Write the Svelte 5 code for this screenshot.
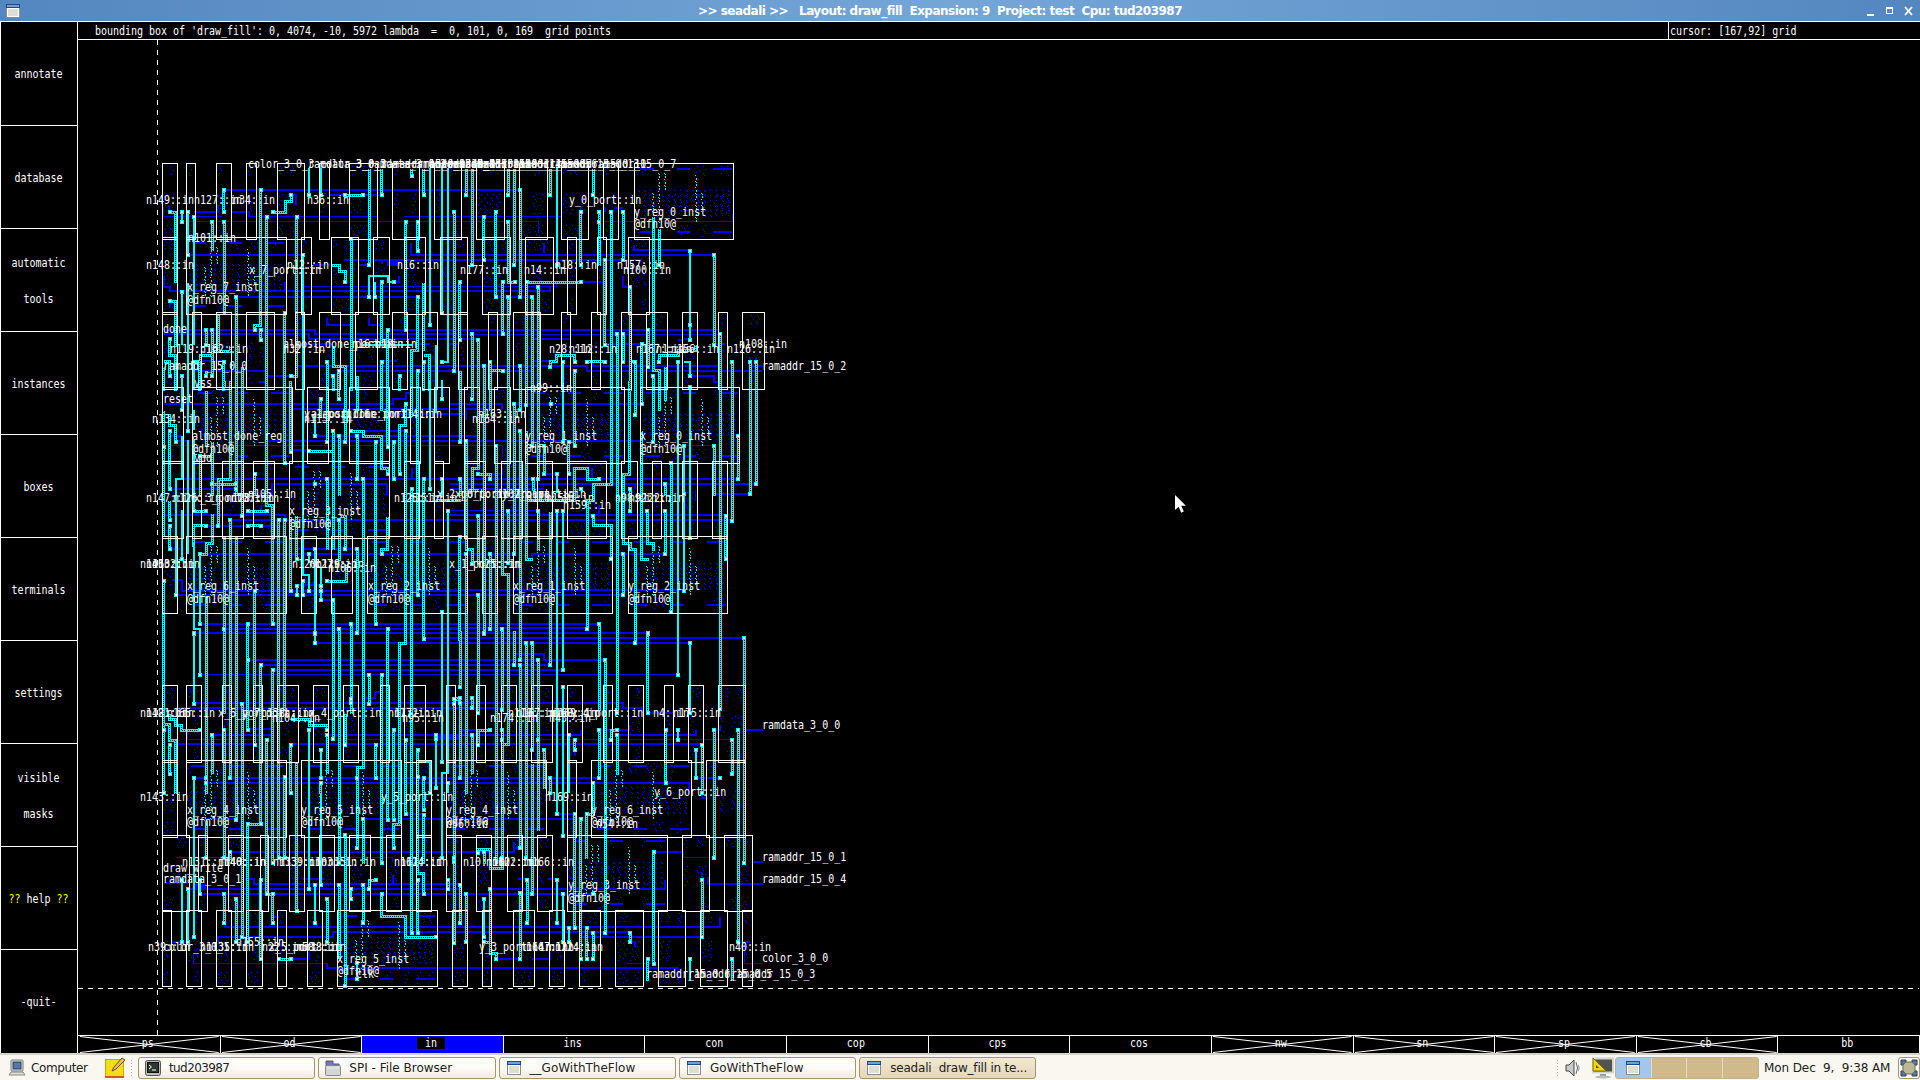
<script>
  const menu = [['annotate'], ['database'], ['automatic', 'tools'], ['instances'], ['boxes'], ['terminals'], ['settings'], ['visible', 'masks'], ['?? help ??'], ['-quit-']];
  const masks = [
    ['ps', 1], ['od', 1], ['in', 2], ['ins', 0], ['con', 0], ['cop', 0], ['cps', 0], ['cos', 0],
    ['nw', 1], ['sn', 1], ['sp', 1], ['cb', 1], ['bb', 0]
  ];
  const tasks = [['tud203987', 'term'], ['SPI - File Browser', 'folder'], ['__GoWithTheFlow', 'win'], ['GoWithTheFlow', 'win'], ['seadali  draw_fill in te...', 'win']];

  // Cell outlines: [top, bottom, "left-right ..."] for every placement row.
  const rows = [
    [163, 239, '162-177 186-195 216-231 246-256 277-304 319-329 349-377 392-419 434-461 476-504 519-547 561-588 603-618 634-733'],
    [237, 314, '162-177 186-286 301-311 331-358 373-389 404-425 440-467 482-510 525-553 567-576 597-606 628-649'],
    [312, 389, '162-177 192-201 216-231 246-274 295-304 319-340 355-377 392-407 422-437 458-467 488-497 513-540 561-570 591-600 621-631 646-667 682-697 718-727 742-764'],
    [387, 463, '162-183 192-292 307-328 349-389 410-420 434-449 464-479 494-510 525-624 640-739'],
    [461, 538, '162-183 192-201 222-243 253-274 289-389 404-419 434-443 464-485 501-522 537-552 567-606 621-637 652-661 682-697 712-727'],
    [536, 613, '162-177 186-286 301-316 331-352 367-467 482-497 513-612 628-727'],
    [685, 762, '162-177 186-201 222-231 253-262 277-298 313-328 343-358 380-389 404-425 446-455 476-485 501-516 531-552 567-582 603-612 628-643 664-673 688-703 718-745'],
    [760, 837, '162-177 186-286 301-401 416-431 446-546 567-576 591-691 706-745'],
    [835, 911, '162-189 198-207 228-243 260-268 289-304 319-334 349-370 386-401 416-431 446-461 476-491 507-522 537-552 567-667 682-709 724-752'],
    [910, 986, '162-171 186-201 216-231 246-262 277-286 307-322 337-437 452-467 482-491 513-534 549-564 579-600 615-643 658-685 700-727 742-752']
  ];
  const cells = rows.flatMap(([t, b, s]) => s.split(' ').map((p) => {
    const [l, r] = p.split('-').map(Number);
    return { l, r, t, b };
  }));

  // Wiring by region, in thirds of a pixel from the region origin.
  // d: via-filled metal, s: plain metal, b: blue mask, c: thin blue; * marks a contact.
  const regions = [
    [130, 150, `d 281,120* 281,186*;d 392,120* 392,527 374,527 374,540*;d 429,186* 465,186 465,154 483,154 483,135*;d 119,186* 137,186 137,398;s 155,186* 155,215*;s 173,186* 173,315*;s 173,398 173,720;s 191,200* 191,585;d 246,215* 246,302;d 282,215* 282,490;d 410,200* 410,720;d 500,200* 500,678 482,678*;s 537,55 537,135*;s 572,55 572,135*;d 644,135* 698,135*;d 718,55 718,345*;d 755,55 755,135*;d 845,55 845,77*;d 881,55 881,135*;s 900,55 900,525*;s 936,55 936,490*;s 954,55 954,635 936,635*;d 972,186* 972,662*;d 827,215* 827,540*;d 863,215* 863,303*;d 664,268* 664,720;s 519,315* 519,720;d 600,345 628,345 628,363 646,363 646,396*;s 717,440* 717,378 775,378 775,396 791,396*;s 736,440* 736,396;d 755,396* 755,580;d 881,396 881,600;d 863,440* 863,600 845,600 845,720;s 155,427* 155,585;d 318,440* 318,720;d 119,454* 137,454 137,590;d 264,490 264,600;d 464,490* 464,720;d 228,540* 228,585*;d 246,540* 246,615 210,615 210,635 191,635*;d 392,540* 392,570*;d 773,540* 773,720;d 119,568* 119,617 137,617 137,720;d 610,585 610,650 646,650 646,720;d 592,635* 592,720;d 101,635 119,635 119,678*;d 626,662* 626,720;d 681,675 681,720;d 336,650 336,720;d 281,635* 281,720;s 918,585 918,720;d 881,617 899,617 899,720;d 881,635* 881,720;d 755,635* 755,720;d 809,678* 809,720;d 863,662* 863,720;s 155,678* 155,720;d 101,650 101,720;s 191,635 191,720;d 209,635 209,720;d 228,660 228,678*;d 246,600 246,678*;d 610,678* 610,720;s 700,585 845,585;d 250,603 300,603 300,585;
b 281,120 990,120;b 118,165 118,186 135,186;b 191,186 263,186 263,165;b 305,186 356,186 356,200;c 101,170 101,200 275,200;c 356,200 740,200;c 820,200 990,200;c 155,215 990,215;b 483,135 498,135 498,165;b 600,135 755,135;b 173,315 519,315;b 842,280 842,315 990,315;b 642,330 990,330;b 548,345 600,345;b 685,345 717,345;b 770,333 810,333;b 770,339 810,339;b 770,345 810,345;b 755,330 755,342;b 806,378 806,396 791,396;b 101,378 101,410 119,410 119,423 990,423;c 520,410 990,410;b 464,396 464,423;b 318,440 863,440;b 101,540 554,540 554,553 990,553;b 101,553 536,553 536,567 950,567;b 774,540 990,540;b 590,505 590,525 663,525;b 717,505 717,525 755,525;b 500,582 610,582;b 845,582 900,582;b 500,648 990,648;b 191,662 410,662;b 626,662 990,662;b 411,678 482,678;b 388,695 410,695;b 191,632 281,632;b 755,632 800,632;b 119,475 119,456`],
    [450, 150, `d 49,55 49,135*;d 67,55 67,345*;d 175,55 175,135*;d 193,55 193,345*;d 211,120* 211,440*;d 301,55 301,135*;s 320,55 320,345*;d 429,55 429,135*;d 101,200* 101,330*;d 137,186* 137,440*;d 175,215* 175,396 195,396*;d 392,186* 392,345*;d 447,186* 447,345;d 447,215* 447,220;d 483,186* 483,720;d 519,186* 519,330*;d 610,200 610,662 628,662 628,720;d 628,235 628,345*;d 29,396* 29,570*;d 158,396* 158,553*;d 231,396* 392,396*;d 229,396 229,720;d 247,440* 247,720;d 265,410* 265,720;d 175,440* 175,720;d 464,330* 464,585*;d 540,410* 540,720;s 720,303* 720,525*;s 720,525 720,570*;d 792,315* 792,585*;d 67,553* 67,720;d 85,570* 85,720;d 501,553* 501,720;d 519,553* 519,635*;d 595,540* 595,650*;d 810,553* 810,720;d 575,582* 575,720;d 540,635 556,635* 556,720;d 301,650* 301,635 320,635 320,617 374,617 374,635*;d 410,635* 464,635*;s 338,635* 338,720;d 374,662* 374,720;d 121,662 158,662*;d 121,635* 121,720;d 103,648* 103,720;d 31,662 31,720;d 211,648* 211,720;d 628,635* 628,617 686,617 686,600 737,600 737,582;s 684,635* 684,720;s 702,635 720,635 720,678*;s 720,712 720,720;d 846,635* 846,720;d 900,635* 900,720;d 918,635* 918,720;d 646,648 646,720;d 610,678* 610,720;
b 0,120 211,120;c 0,200 335,200;c 0,215 265,215 265,248;c 447,215 846,215 846,190;b 553,285 553,300 720,300;b 0,315 790,315;b 0,330 575,330;b 283,280 283,310;c 0,410 318,410 318,396;b 0,423 301,423 301,410;b 392,396 464,396;b 519,378 519,410 537,410;b 138,440 247,440;b 0,540 810,540;c 0,553 810,553;b 0,567 85,567;b 250,567 356,567;b 0,582 29,582;b 464,582 575,582;b 684,570 720,567;b 792,582 825,582;b 250,632 300,632;b 0,648 410,648 410,662 936,662;b 428,630 428,648 810,648;b 900,648 940,648;b 158,662 250,662;b 720,678 792,678 792,697 810,697;b 464,170 464,186;b 492,175 519,175;b 392,170 392,180;b 900,620 900,632;b 918,620 918,632`],
    [130, 380, `d 101,90 101,200*;d 101,200 101,470;d 101,603* 101,780;d 119,100 119,135 137,135 137,185*;d 119,154* 119,327*;s 155,0 155,90*;s 155,168 155,298 137,298 137,645*;s 155,390 155,538*;s 173,0 173,154*;s 173,180 173,522;s 191,90 191,150;s 191,180 191,394*;d 191,394* 228,394*;d 228,437* 191,437 191,500;s 191,490 191,747 209,747 209,780;d 228,30 228,200;d 246,228 210,228* 210,345;d 246,185 246,345;d 282,0 282,20;d 301,0 301,298 264,298 264,437*;d 319,0 319,345;d 319,327* 319,330;d 337,0 337,408*;d 246,312* 318,312*;d 353,394* 410,394*;d 353,437* 392,437*;d 410,0 410,375 428,375 428,732*;d 464,0 464,248*;d 482,0 482,215*;s 519,0 519,585 537,585 537,632*;d 301,420* 301,780;d 283,470 283,747*;d 319,470 319,780;d 246,400 246,490 228,490 228,522 210,522*;s 210,522 210,732*;d 446,420* 446,780;d 464,420* 464,780;d 482,408 482,632*;d 500,405 500,538*;d 374,282* 374,345;d 374,632* 374,780;d 353,732* 353,780;d 228,645 228,780;d 119,360 119,420*;d 119,437* 119,508*;d 572,58* 572,108;s 555,100 555,168*;d 592,0 592,185*;d 626,0 626,58*;d 646,0 646,185*;d 682,0 682,90;d 682,168* 682,298*;d 610,154* 610,213 537,213*;d 610,154 610,508;d 628,168* 628,345;d 592,298* 592,508;d 628,420* 628,540;d 628,408 646,408 646,508*;d 700,298* 700,780;d 662,154* 700,154 700,170 755,170 755,265 773,265 773,283*;d 737,185* 737,732*;d 755,0 755,90;d 773,0 773,200*;d 791,185* 791,298*;d 827,72* 827,135 809,135 809,283*;d 827,154* 827,780;d 845,0 845,108;d 845,327* 845,780;d 863,0 863,645*;d 881,298* 881,780;s 900,0 900,327*;s 918,0 918,100;s 936,0 936,58*;s 936,298* 936,345;s 954,394* 954,780;s 936,695* 936,780;d 915,360 990,360;s 555,508* 555,760*;s 537,522* 537,550;s 519,603* 519,645*;s 500,617* 500,645*;s 572,560 572,660*;s 572,632* 572,617*;d 592,603* 650,603 650,550;d 610,660* 610,780;d 628,747* 628,780;d 682,508* 682,760*;d 664,732* 664,780;d 773,408 773,508 755,508 755,522*;d 773,747* 773,780;s 191,760* 191,780;s 555,312* 555,314;
b 101,72 788,72 788,57 827,57 827,40 840,40;b 490,87 990,87;b 773,102 990,102;b 662,154 827,154;b 119,168 155,168;b 555,168 990,168;b 137,183 180,183;b 410,183 990,183;c 101,197 990,197;b 482,210 537,210;b 155,297 990,297;b 250,312 318,312;b 426,345 426,312 772,312 772,345;b 119,327 318,327;b 845,265 845,297;b 101,375 101,405 464,405 464,420;b 301,420 990,420;b 228,437 447,437;b 210,522 990,522;b 119,508 150,508;b 500,508 682,508;b 125,600 155,600 155,632 990,632;b 137,645 990,645;b 209,732 990,732;b 283,747 990,747;b 209,760 990,760;b 881,774 990,774;b 500,615 572,615;b 572,660 610,660;b 392,375 392,405`],
    [450, 380, `d 31,0 31,185*;d 31,298* 31,345;d 49,183* 49,508 67,508 67,553*;d 67,0 67,58*;d 85,0 85,265 67,265 67,330 85,330;d 83,283* 121,283 121,298*;d 103,0 103,760*;d 121,0 121,90;d 139,197* 139,780;d 175,0 175,345;d 157,360 157,583 175,583 175,780;d 193,72* 193,522*;d 211,0 211,90*;d 211,154* 211,780;d 229,0 229,75*;d 229,150 229,538 247,538;d 247,0 247,197*;d 249,298* 249,330;d 265,0 265,298*;d 265,394* 265,510;d 283,197* 283,283*;d 301,394 301,780;s 320,283* 320,340;s 320,394* 320,780;s 338,0 338,185*;s 338,394* 338,780;d 356,185* 356,283*;d 374,0 374,197*;d 230,360 374,360 374,265 412,265 412,298 447,298*;d 484,0 484,313 430,313 430,360 412,360 412,747*;d 429,408* 429,437 484,437 484,538*;d 501,0 501,780;d 538,0 538,283 520,283 520,490 540,490 540,508 556,508 556,780;d 556,0 556,105*;d 575,0 575,72*;d 575,150 575,538 595,538;d 610,0 610,185*;d 628,0 628,90;d 646,0 646,60;s 684,0 684,780;s 720,22* 720,473*;s 702,197* 702,632*;s 702,342* 702,345;d 664,248* 664,695*;d 792,197* 792,345;d 810,0 810,780;d 846,0 846,423*;d 864,168* 864,298*;d 901,0 901,342*;d 919,0 919,312*;d 827,408* 827,538*;d 646,312* 646,345;d 646,394* 646,522*;d 592,394* 592,490 610,490 610,512;d 540,327* 540,394*;d 519,522* 519,645*;d 85,408* 85,553;d 85,645* 85,780;d 29,470* 29,780;d 121,522* 121,747*;d 49,522* 49,780;d 157,747* 157,780;d 447,732* 447,780;d 593,760* 593,780;d 883,774* 883,780;d 175,394* 175,550*;d 302,72* 302,75;d 392,327* 392,330;
b 0,72 157,72 157,87;b 190,72 575,72;b 48,120 48,87 120,87;b 0,102 48,102;b 0,168 83,168;b 0,183 570,183;c 0,197 157,197 157,230;c 570,197 790,197;b 0,297 864,297;b 0,312 555,312 555,327;b 555,312 919,312;b 0,327 283,327;b 792,342 900,342;b 447,375 447,405 827,405;b 0,405 447,405;b 0,420 846,420;c 0,391 265,391;b 0,522 193,522;b 247,540 247,522 646,522;b 0,630 700,630;b 0,645 519,645;b 0,732 447,732;b 0,745 410,745;b 0,760 593,760;b 0,774 883,774;b 427,265 427,297;b 283,282 320,282;b 190,154 211,154;b 83,265 83,283;b 121,283 157,283 157,262;c 737,327 737,360`],
    [130, 630, `d 101,0 101,490*;s 191,12* 191,222*;s 209,0 209,135*;d 228,0 228,490;d 228,444* 228,459*;d 301,0 301,444*;d 319,0 319,570*;d 283,0 283,250;d 283,300* 283,600;d 353,0 353,300*;d 353,90* 353,92;d 374,0 374,345*;d 392,105* 392,583*;d 428,120* 428,600;d 446,0 446,600;d 464,0 464,240;d 464,440* 464,600;s 555,0 555,40*;s 555,12* 555,14;d 610,0 610,328*;d 628,0 628,600;d 664,0 664,208*;d 664,218* 664,250;d 700,0 700,412 682,412 682,444*;d 682,444 682,600;d 717,135* 717,222*;d 755,135* 755,600;d 773,0 773,570*;d 827,0 827,40 809,40 809,583 791,583 791,600;d 845,0 845,600;d 881,0 881,27*;s 936,0 936,396*;s 954,0 954,430 936,430 936,600;d 337,222* 337,600;d 119,250 119,268 137,268 137,285 155,285 155,300 209,300*;d 101,283 119,283 119,330 137,330 137,490;d 101,300* 101,301;d 119,345* 119,432*;d 246,315* 246,430;d 410,330* 410,600;d 482,345* 482,490*;d 482,268 537,268 537,285 592,285 592,300*;s 537,300* 537,600;d 592,315* 592,430;s 572,360* 572,444*;d 572,460* 572,490;s 572,490 572,600;d 646,250 646,345*;d 737,345* 737,444*;d 791,300* 791,570*;d 827,330* 827,553*;d 863,360* 863,490;s 864,395 900,395 900,490*;d 881,444* 881,540*;d 881,555* 881,600;s 918,315* 918,475*;s 918,328* 918,330;s 191,444* 191,600;d 353,583* 392,583;s 954,460* 954,490;d 500,395 500,600;d 863,440* 863,600;d 990,208 972,208* 972,600;d 353,583 353,600;d 700,567* 700,600;
b 191,9 990,9;b 555,39 990,39;b 353,90 990,90;b 392,105 990,105;b 428,120 990,120;c 209,133 990,133;b 881,24 990,24;b 191,219 990,219;b 137,234 990,234;b 705,204 735,204 735,186 750,186;b 353,298 428,298;b 246,315 426,315 426,298;c 172,300 172,328 410,328;b 137,342 374,342;b 482,342 990,342;b 590,315 990,315;c 590,328 990,328;b 918,316 990,316;b 918,322 990,322;b 918,327 990,327;b 301,444 990,444;b 228,459 990,459;b 700,567 990,567;b 228,567 318,567;b 827,553 881,553;b 191,444 228,444;b 464,489 482,489;b 353,582 392,582;b 555,262 555,298;b 281,285 281,298`],
    [450, 630, `d 13,222* 13,600;d 31,0 31,170*;d 31,218* 31,444*;d 49,0 49,490;d 10,205 31,205*;d 67,205* 67,235*;d 85,0 85,250*;d 85,345* 85,300 121,300*;d 67,315* 67,430;s 103,0 103,12*;d 139,0 139,600;d 157,0 157,240*;d 157,300* 157,600;d 157,330* 157,332;d 175,0 175,343 157,343;d 193,0 193,105*;d 211,0 211,90*;d 211,105* 211,600;d 229,40* 229,600;d 247,40* 247,360*;d 247,400 247,600;d 265,90* 265,330*;d 265,330 265,600;d 301,0 301,105*;d 301,444* 301,490*;s 320,0 320,553*;s 338,0 338,120*;s 338,170* 338,600;d 447,0 447,240;d 447,300* 447,444*;d 465,90* 465,600;d 501,0 501,250*;d 501,300* 483,300 483,330*;d 501,315* 501,432;d 556,0 556,40*;d 593,12* 593,250*;s 684,0 684,135*;s 720,40* 720,250*;d 810,0 810,237*;s 810,444* 810,446;d 883,24* 883,600;d 647,300* 647,460*;s 684,300* 684,330*;s 357,315* 357,490;d 374,330* 374,360*;d 283,360* 283,475;s 738,360* 738,444*;d 756,345* 756,490*;d 792,300* 792,600;d 846,330* 846,432*;d 864,300* 864,600;d 429,460* 429,553 410,553*;d 374,553* 374,600;d 392,567* 392,600;d 410,553 410,600;
b 0,9 593,9;b 0,24 883,24;b 0,39 720,39;b 193,72 283,72 283,90 465,90;b 0,90 265,90;b 0,105 301,105;b 0,120 338,120;c 0,133 684,133;b 0,218 519,218 519,234 575,234 575,250;b 0,234 157,234;b 31,300 85,300;b 447,300 537,300 537,285;b 0,315 392,315 392,300;b 500,315 737,315 737,300;c 265,328 846,328;b 0,342 756,342;b 0,444 447,444;b 0,459 718,459 718,490;b 738,444 810,444;b 320,553 374,553;b 0,567 392,567;b 887,300 938,300;b 0,322 30,322;b 593,250 675,250;b 374,360 374,378;b 792,300 810,300 810,285;b 756,490 756,504 775,504`],
    [130, 820, `s 191,0 191,352*;d 228,0 228,115*;d 283,0 283,115*;d 301,97* 301,120;d 337,0 337,352*;d 353,12* 392,12*;d 353,12 353,367*;d 392,180* 392,418*;d 410,0 410,222* 428,222*;d 428,0 428,130*;d 446,0 446,115*;d 464,0 464,115*;d 428,222 428,310*;d 500,0 500,272*;s 537,0 537,207*;s 572,0 572,195*;s 555,195* 555,310*;d 628,0 628,130*;d 646,45* 646,498*;d 628,195* 628,415;d 682,0 682,85*;d 700,0 700,130;d 700,195* 700,310*;d 755,0 755,130*;d 791,85* 791,12 810,12;d 845,0 845,340*;d 863,0 863,160 881,160 881,222*;d 863,180* 863,340*;d 881,0 881,130;s 936,0 936,115*;d 972,0 972,115;d 954,180* 954,207*;s 155,180* 155,367*;s 173,207* 173,367*;s 209,180* 209,222*;d 283,222* 283,310*;d 319,237* 319,367*;d 592,237* 592,367*;s 664,207* 664,237*;d 717,207* 717,180 737,180*;d 755,222* 755,290 827,290 827,352 917,352*;d 446,417* 482,417*;s 682,430* 682,478*;
b 301,97 990,97;c 135,112 788,112 788,125;b 101,190 180,190;b 345,177 373,177 373,192 990,192;b 173,207 990,207;b 190,195 228,195;b 190,201 228,201;b 209,222 410,222;b 428,222 990,222;b 788,165 788,192;b 520,177 585,177;b 283,321 990,321;b 264,367 264,351 608,351 608,336 990,336;c 191,400 191,430 590,430;b 590,430 590,444 990,444;b 482,417 536,417 536,395;b 125,367 173,367;b 430,290 447,290`],
    [450, 820, `d 13,0 13,115*;d 13,127* 13,370*;d 31,195* 31,310*;d 49,222* 49,367*;d 83,100* 83,87 121,87 121,145 157,145 157,120;d 103,97* 103,130;d 139,0 139,130;d 157,0 157,115*;d 211,0 211,85*;d 229,0 229,115*;d 247,0 247,222*;s 338,0 338,48*;d 374,0 374,323*;d 392,0 392,418*;d 410,0 410,115;d 465,0 465,340*;d 792,0 792,115*;d 883,0 883,130*;d 864,0 864,367*;d 611,97* 611,432*;d 756,180* 756,352*;s 320,180* 320,310*;s 338,222* 338,367*;s 356,323* 356,367*;d 231,180* 231,310*;d 211,220* 211,418*;d 410,323* 410,418*;d 429,338* 429,418*;d 540,338* 540,367*;d 121,207* 121,367;s 103,237* 103,352*;d 101,367* 121,367 121,400 139,400 139,418*;d 593,417* 593,482;s 720,417* 720,482;d 846,417* 846,482;s 429,222* 429,224;
b 0,97 192,97 192,65;b 192,85 211,85;b 0,192 30,192;b 121,207 646,207 646,180;b 0,222 429,222;b 611,97 700,97 700,115;c 700,112 792,112;b 774,170 774,192 938,192;b 756,180 756,155;b 905,127 938,127;b 0,321 810,321 810,290;b 0,336 540,336;b 392,351 756,351;b 0,444 683,444 683,480;c 883,367 883,430 938,430;c 530,430 611,430;b 139,417 211,417;b 247,417 301,417 301,395;b 864,367 900,367;b 540,367 555,367 555,380;b 205,177 231,177;b 295,177 320,177`]
  ];

  const paths = { d: '', s: '', b: '', c: '' };
  const contacts = [];
  for (const [ox, oy, text] of regions) {
    for (const item of text.split(';')) {
      const [kind, ...pts] = item.trim().split(' ');
      const half = kind === 'd' || kind === 'c';
      pts.forEach((p, i) => {
        const [x, y] = p.replace('*', '').split(',').map(Number);
        const fit = (v) => (half ? Math.floor(v / 3) + 0.5 : Math.round(v / 3));
        paths[kind] += `${i ? 'L' : 'M'}${ox + fit(x)} ${oy + fit(y)}`;
        if (p.endsWith('*')) contacts.push([ox + Math.round(x / 3), oy + Math.round(y / 3)]);
      });
    }
  }
  const metalNodes = contacts.map(([x, y]) => `M${x - 2} ${y - 2}h4v4h-4z`).join('');
  const nodeCores = contacts.map(([x, y]) => `M${x - 1} ${y - 1}h2v2h-2z`).join('');

  // Transistor texture inside each cell.
  let seed = 7;
  const rnd = () => (seed = (seed * 16807) % 2147483647) / 2147483647;
  let dots = '';
  let cyanDots = '';
  let rails = '';
  const dot = (x, y) => `M${x} ${y}h1v1h-1z`;
  for (const { l, r, t } of cells) {
    const wide = r - l > 80;
    for (let x = l + 2; x < r - 3; x += 6) {
      for (const [a, z] of [[3, 13], [31, 51], [62, 74]]) {
        if (rnd() < (wide && a !== 31 ? 0.65 : 0.35)) continue;
        for (let y = a; y < z; y += 2 + Math.floor(rnd() * 3)) dots += dot(x + ((y >> 1) % 4), t + y);
      }
    }
    if (wide) {
      for (let x = l + 4; x < r - 4; x += 6) for (let y = 27; y < 54; y += 5) dots += dot(x, t + y) + (rnd() < 0.5 ? dot(x + 1, t + y + 1) : '');
      for (const y of [5, 68]) for (const [a, b] of [[6, 20], [43, 56], [79, 98]]) rails += `M${l + a} ${t + y}h${b - a}v2h-${b - a}z`;
      for (const [x, a, b] of [[18, 30, 62], [24, 10, 60], [30, 10, 28], [61, 12, 60], [67, 30, 50]])
        for (let y = a; y < b; y += 3) cyanDots += dot(l + x + (y % 2 ? 1 : 0), t + y) + (y % 4 ? dot(l + x + 1, t + y + 1) : '');
    }
  }

  const labelSets = [
    [130, 150, '356,43,color_3_0_3 536,43,ramdata_3_0_3 572,43,color_3_0_2 718,43,ramdata_3_0_2 755,43,ramaddr_15_0_9 845,43,ramaddr_15_0_8 881,43,ramaddr_15_0_15 900,43,color_3_0_1 936,43,ramaddr_15_0_12 954,43,ramaddr_15_0_10 50,151,n149::in 196,151,n127::in 313,151,n34::in 533,151,n36::in 178,265,n101::in 50,346,n148::in 475,346,n12::in 360,361,x_7_port::in 803,346,n16::in 173,412,x_reg_7_inst 173,450,@dfn10@ 101,538,done 461,583,almost_done_port::in 668,583,n16::in 737,583,n18::in 124,598,n119::in 214,598,n162::in 461,598,n32::in 101,650,ramaddr_15_0_0 194,700,vss'],
    [450, 150, '49,43,ramaddr_15_0_11 67,43,ramaddr_15_0_14 175,43,ramaddr_15_0_5 193,43,ramaddr_15_0_6 301,43,ramaddr_15_0_13 320,43,ramaddr_15_0_10 429,43,ramaddr_15_0_7 361,151,y_0_port::in 555,187,y_reg_0_inst 555,223,@dfn10@ 34,361,n177::in 225,361,n14::in 319,346,n18::in 505,346,n157::in 523,361,n100::in 299,598,n28::in 360,598,n112::in 560,598,n167::in 620,598,n1::in 666,598,n156::in 833,598,n126::in 869,583,n108::in 938,648,ramaddr_15_0_2'],
    [130, 380, '101,58,reset 68,118,n134::in 190,170,almost_done_reg 190,207,@dfn10@ 194,235,vdd 524,118,n115::in 524,103,y_1_port::in 545,103,almost_done_port::in 650,103,n116::in 794,103,n114::in 358,343,n105::in 50,355,n147::in 132,355,n126::in 195,355,x_3_port::in 290,355,n128::in 305,355,n137::in 481,394,x_reg_3_inst 481,432,@dfn10@ 794,355,n125::in 840,355,n151::in 32,553,n145::in 50,553,n163::in 68,553,n102::in 488,553,n120::in 540,553,n127::in 560,553,n129::in 596,566,n106::in 173,620,x_reg_6_inst 173,658,@dfn10@ 716,620,x_reg_2_inst 716,658,@dfn10@ 960,553,x_1_port::in'],
    [450, 380, '243,25,n99::in 88,103,n163::in 70,118,n164::in 229,170,y_reg_1_inst 229,207,@dfn10@ 573,170,x_reg_0_inst 573,207,@dfn10@ -36,343,x_2_port::in 18,343,x_0_port::in 140,343,n107::in 160,343,y_2_port::in 230,343,n_port::in 230,355,n110::in 290,355,n152::in 343,377,n159::in 498,355,n98::in 540,355,n92::in 560,355,n122::in 88,553,n25::in 192,620,x_reg_1_inst 192,658,@dfn10@ 538,620,y_reg_2_inst 538,658,@dfn10@'],
    [130, 630, '32,250,n142::in 50,250,n181::in 115,250,n165::in 268,250,x_6_port::in 340,250,y_7_port::in 395,250,n138::in 430,266,n104::in 540,250,x_4_port::in 777,250,n17::in 795,250,n172::in 820,266,n95::in 32,502,n143::in 173,540,x_reg_4_inst 173,578,@dfn10@ 516,540,y_reg_5_inst 516,578,@dfn10@ 757,502,y_5_port::in'],
    [450, 630, '-9,540,y_reg_4_inst -9,578,@dfn10@ -10,582,n56::in 124,266,n174::in 178,250,n110::in 200,250,n167::in 299,266,n43::in 299,250,n168::in 310,250,n169::in 365,250,y_4_port::in 613,250,n4::in 672,250,n175::in 938,285,ramdata_3_0_0 289,502,n169::in 616,487,y_6_port::in 427,540,y_reg_6_inst 427,578,@dfn10@ 441,582,n54::in'],
    [130, 820, '101,145,draw_write 101,177,ramdata_3_0_1 160,127,n131::in 268,127,n140::in 286,127,n40::in 432,127,n133::in 450,127,n139::in 540,127,n103::in 596,127,n151::in 794,127,n161::in 813,127,n124::in 58,382,n39::in 101,382,color_3_0_1 214,382,n113::in 232,382,n135::in 322,367,n155::in 400,382,n22::in 420,382,x_5_port::in 500,382,n58::in 524,382,n38::in 625,418,x_reg_5_inst 625,455,@dfn10@ 682,462,clk'],
    [450, 820, '43,127,n10::in 112,127,n162::in 130,127,n102::in 232,127,n166::in 938,112,ramaddr_15_0_1 938,178,ramaddr_15_0_4 356,195,y_reg_3_inst 356,234,@dfn10@ 90,382,y_3_port::in 212,382,n164::in 230,382,n167::in 299,382,n121::in 317,382,n124::in 841,382,n40::in 938,415,color_3_0_0 591,462,ramaddr_15_0_6 718,462,ramaddr_15_0_5 847,462,ramaddr_15_0_3']
  ];
  const labels = labelSets.flatMap(([ox, oy, s]) => s.split(' ').map((q) => {
    const [x, y, text] = q.split(',');
    return { x: Math.round(ox + x / 3) - 1, y: Math.round(oy + y / 3 + 3.6), text };
  }));
</script>

{#snippet winIcon()}
  <svg class="ico" width="16" height="16" viewBox="0 0 16 16">
    <rect x="1" y="1" width="14" height="14" fill="#8b8e88" /><rect x="1" y="1" width="14" height="4" fill="#204a87" />
    <rect x="2" y="2" width="12" height="2" fill="#729fcf" /><rect x="2" y="5" width="12" height="9" fill="#fff" /><rect x="3" y="6" width="10" height="7" fill="#deded8" />
  </svg>
{/snippet}

<div class="screen">
  <header>
    {@render winIcon()}
    <h1>&gt;&gt; seadali &gt;&gt;&nbsp;&nbsp; Layout: draw_fill&nbsp; Expansion: 9&nbsp; Project: test&nbsp; Cpu: tud203987</h1>
    <svg class="controls" width="50" height="20" viewBox="0 0 50 20" fill="none" stroke="#fff">
      <path d="M2 14h7" stroke-width="2" /><rect x="21.500" y="6.500" width="6" height="6" /><path d="M21 7h7" stroke-width="2" /><path d="M40 6l7 8M47 6l-7 8" stroke-width="1.800" />
    </svg>
  </header>
  <main>
    <nav>
      {#each menu as lines}
        <button>
          {#each lines as line}
            {#if line.includes('?')}
              <span class="px"><i>??</i> help <i>??</i></span>
            {:else}
              <span class="px">{line}</span>
            {/if}
          {/each}
        </button>
      {/each}
    </nav>
    <section>
      <div class="status">
        <span class="px">bounding box of 'draw_fill': 0, 4074, -10, 5972 lambda&nbsp; =&nbsp; 0, 101, 0, 169&nbsp; grid points</span>
        <div class="cursor"><span class="px">cursor: [167,92] grid</span></div>
      </div>
      <svg class="layout" width="1842" height="995" viewBox="78 40 1842 995" shape-rendering="crispEdges" fill="none">
        <defs>
          <pattern id="vias" width="2" height="2" patternUnits="userSpaceOnUse">
            <rect width="2" height="2" fill="#0ff" /><rect width="1" height="1" fill="#000" /><rect x="1" y="1" width="1" height="1" fill="#000" />
          </pattern>
        </defs>
        <path d="M157.5 40V1035M78 988.500H1919" stroke="#fff" stroke-dasharray="5 5" />
        <path d={dots + rails} fill="#00f" />
        <path d={paths.c} stroke="#00f" />
        <path d={paths.b} stroke="#00f" stroke-width="2" />
        <path d={cyanDots} fill="#0ff" />
        <path d={paths.d} stroke="#0ff" stroke-width="3" />
        <path d={paths.d} stroke="url(#vias)" />
        <path d={paths.s} stroke="#0ff" stroke-width="2" />
        <path d={metalNodes} fill="#0ff" />
        <path d={nodeCores} fill="#fff" />
        {#each cells as c}
          <rect x={c.l + 0.5} y={c.t + 0.5} width={c.r - c.l} height={c.b - c.t} stroke="#fff" />
        {/each}
        {#each labels as t}
          <text transform="translate({t.x} {t.y}) scale(1 1.2)">{t.text}</text>
        {/each}
        <path shape-rendering="auto" d="M1175 495v15l3.600-3.300 2.600 6 2.600-1.200-2.500-5.700h4.600z" fill="#fff" />
      </svg>
      <div class="masks">
        {#each masks as [name, state]}
          <div class="mask" class:active={state === 2}>
            {#if state === 1}
              <svg viewBox="0 0 141 17" preserveAspectRatio="none" shape-rendering="crispEdges"><path d="M1 .5L140 16.500M1 16.500L140 .5" stroke="#fff" /></svg>
            {/if}
            <span class="px">{name}</span>
          </div>
        {/each}
      </div>
    </section>
  </main>
  <footer>
    <svg class="pc" width="18" height="18" viewBox="0 0 18 18">
      <rect x="3" y="1" width="12" height="11" rx="1" fill="#e8e8e2" stroke="#77796f" /><rect x="5" y="3" width="8" height="7" fill="#5577a8" stroke="#23406e" /><path d="M3 13h12l2 3H1z" fill="#ddddd6" stroke="#888a80" />
    </svg>
    <span class="computer">Computer</span>
    <svg class="note" width="24" height="22" viewBox="0 0 24 22">
      <rect x="1.500" y="2.500" width="18" height="17" fill="#f5dc16" stroke="#c9a400" /><path d="M1 20h19" stroke="#ce5c00" stroke-width="2" /><path d="M8 14l2-4L18 1l3 2-9 9z" fill="#e9b96e" stroke="#6b4a12" />
    </svg>
    <span class="grip"></span>
    <div class="tasks">
      {#each tasks as [name, kind], i}
        <button class="task" class:on={i === 4}>
          {#if kind === 'term'}
            <svg class="ico" width="16" height="16" viewBox="0 0 16 16"><rect x=".5" y=".5" width="15" height="15" rx="2" fill="#babdb6" stroke="#555753" /><rect x="2.500" y="2.500" width="11" height="10" fill="#2a3a2c" stroke="#111" /><path d="M4 5l2.500 2L4 9M7 10h4" fill="none" stroke="#fff" /></svg>
          {:else if kind === 'folder'}
            <svg class="ico" width="16" height="16" viewBox="0 0 16 16"><path d="M1 1h7v3h6v5H1z" fill="#7a74b0" stroke="#57528a" /><rect x=".5" y="5.500" width="15" height="10" rx="1" fill="#d3d5d2" stroke="#888a85" /><path d="M2 8h12" stroke="#eee" /></svg>
          {:else}
            {@render winIcon()}
          {/if}
          <span class:tight={i === 0} class:snug={i === 4}>{name}</span>
        </button>
      {/each}
    </div>
    <div class="tray">
      <span class="grip"></span>
      <svg class="vol" width="18" height="20" viewBox="0 0 18 20"><path d="M2 7h3l5-5v16l-5-5H2z" fill="#c8cac6" stroke="#444" /><path d="M12 4q3 6 0 12" fill="none" stroke="#666" /><path d="M14 7q2 3 0 6" fill="none" stroke="#8fb5df" stroke-width="1.500" /></svg>
      <svg class="mon" width="24" height="22" viewBox="0 0 24 22"><rect x="2" y="1.500" width="20" height="14" fill="#50534f" stroke="#d3d5d0" stroke-width="2" /><path d="M2 1v13h13z" fill="#f0d020" stroke="#8b7300" /><path d="M5 8v3h3z" fill="#50534f" /><path d="M9 17h6v2H9z" fill="#999" /><ellipse cx="12" cy="20" rx="8" ry="1.500" fill="#babdb6" /></svg>
      <div class="pager"><span class="cur">{@render winIcon()}</span><span></span><span></span><span></span></div>
      <time>Mon Dec&nbsp; 9,&nbsp; 9:38 AM</time>
      <div class="show"><svg width="18" height="18" viewBox="0 0 18 18"><path d="M1 1h5v5H1zM12 1h5v5h-5zM1 12h5v5H1zM12 12h5v5h-5z" fill="#5a7499" stroke="#2e4260" /><path d="M6 3h6l3 3v6l-3 3H6l-3-3V6z" fill="#b9b995" stroke="#6c6c50" /></svg></div>
    </div>
  </footer>
</div>

<style>
  :global(body) { margin: 0; background: #000; }
  .screen { width: 1920px; height: 1080px; display: flex; flex-direction: column; overflow: hidden; background: #000; color: #fff; }
  button { font: inherit; color: inherit; margin: 0; padding: 0; border: 0; background: none; }
  header { height: 21px; flex: none; display: flex; align-items: center; background: linear-gradient(90deg, #5487bf, #75a6d8 50%, #5487bf); padding: 0 5px; box-sizing: border-box; }
  header .ico { flex: none; }
  h1 { flex: 1; margin: 0; text-align: center; font: bold 12px/20px 'DejaVu Sans', sans-serif; padding-right: 6px; white-space: pre; letter-spacing: -.52px; }
  .controls { flex: none; }
  main { height: 1032px; flex: none; display: flex; }
  nav { width: 78px; box-sizing: border-box; border: solid #fff; border-width: 1px 1px 0; display: flex; flex-direction: column; }
  nav button { height: 103px; flex: none; box-sizing: border-box; border-bottom: 1px solid #fff; padding-right: 1px; display: flex; flex-direction: column; align-items: center; justify-content: center; gap: 23px; }
  nav button:first-child { height: 104px; }
  nav button:last-child { border: 0; }
  .px { font: 10px/13px 'DejaVu Sans Mono', monospace; white-space: pre; transform: scaleY(1.2); display: inline-block; }
  i { font-style: normal; color: #ff0; }
  section { flex: 1; display: flex; flex-direction: column; min-width: 0; }
  .status { height: 19px; box-sizing: border-box; border: solid #fff; border-width: 1px 0; display: flex; align-items: center; justify-content: space-between; padding-left: 17px; }
  .status > .px { letter-spacing: -.02px; }
  .cursor { width: 252px; height: 17px; border-left: 1px solid #fff; display: flex; align-items: center; padding-left: 1px; box-sizing: border-box; }
  .layout { display: block; flex: none; }
  text { font: 10px 'DejaVu Sans Mono', monospace; fill: #fff; }
  .masks { height: 18px; flex: none; box-sizing: border-box; border-top: 1px solid #fff; display: grid; grid-template-columns: repeat(13, 1fr); width: 1842px; padding-left: 1px; }
  .mask { position: relative; box-sizing: border-box; border-right: 1px solid #fff; display: flex; align-items: center; justify-content: center; padding: 0 3px 3px 0; }
  .mask svg { position: absolute; left: 0; top: 0; width: 100%; height: 17px; }
  .mask .px { line-height: 10px; }
  .active { background: #00f; }
  .active .px { background: #000; padding: 0 8px; }
  footer { flex: 1; box-sizing: border-box; border-top: 2px solid #d5d2cb; background: #faf7f0; color: #222; display: flex; align-items: center; font: 12px 'DejaVu Sans', sans-serif; padding: 1px 0 0 8px; }
  .computer { margin-left: 5px; width: 73px; letter-spacing: -.4px; }
  .tight { letter-spacing: -.6px; }
  .snug { letter-spacing: -.2px; }
  .grip { width: 4px; height: 18px; background: radial-gradient(circle, #bdb9a8 .8px, transparent 1px) 0 0 / 3px 3px; }
  .note { margin-right: 2px; }
  .tasks { display: flex; gap: 3px; margin-left: 4px; }
  .task { width: 177.300px; height: 22px; box-sizing: border-box; border: 1px solid #a8946c; border-radius: 3px; background: linear-gradient(#fff, #fdfbf7 50%, #f2ead9); display: flex; align-items: center; gap: 8px; padding-left: 6px; white-space: pre; }
  .on { background: linear-gradient(#f1e8d5, #e4d7b8); }
  .tray { margin-left: auto; display: flex; align-items: center; }
  .vol { margin: 0 9px 0 4px; }
  .pager { width: 144px; height: 22px; box-sizing: border-box; border: 1px solid #c5b183; border-radius: 3px; background: #cfba8c; display: grid; grid-template-columns: repeat(4, 1fr); overflow: hidden; }
  .pager span { border-right: 1px solid #e8dcc0; display: flex; align-items: center; justify-content: center; }
  .pager span:last-child { border: 0; }
  .pager .cur { background: #a3c6ec; }
  time { margin: 0 6px 0 5px; width: 128px; white-space: pre; letter-spacing: -.1px; }
  .show { width: 22px; height: 22px; box-sizing: border-box; border: 1px solid #a8946c; border-radius: 3px; display: flex; align-items: center; justify-content: center; }
</style>
